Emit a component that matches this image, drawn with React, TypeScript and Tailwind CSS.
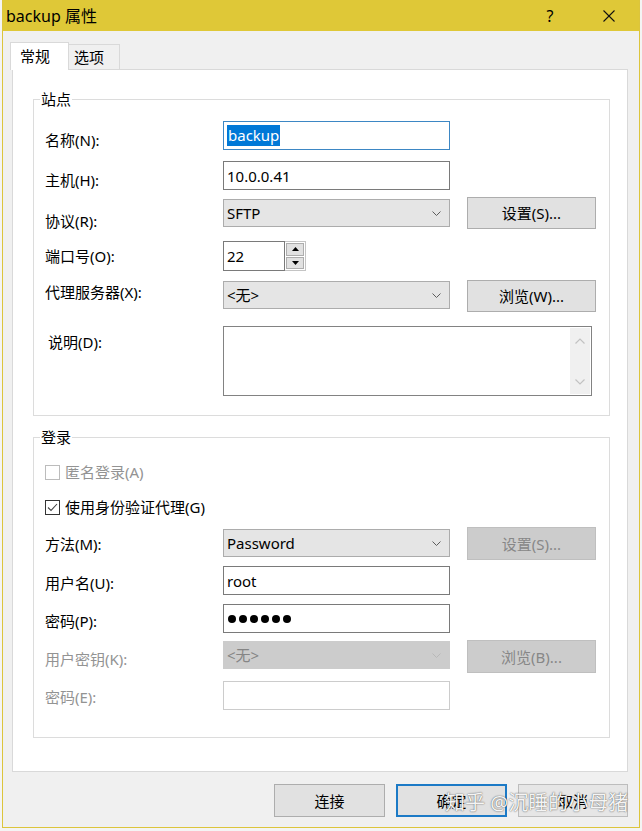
import React from "react";

function Chevron({ disabled }: { disabled?: boolean }) {
  return (
    <svg width="9" height="5" viewBox="0 0 9 5" className="shrink-0">
      <polyline points="0.5,0.5 4.5,4.5 8.5,0.5" fill="none" stroke={disabled ? "#b8b8b8" : "#5c5c5c"} strokeWidth="1" />
    </svg>
  );
}

function Select({ value, disabled }: { value: string; disabled?: boolean }) {
  return disabled ? (
    <div className="flex h-[28px] w-[227px] items-center justify-between border border-[#cccccc] bg-[#cccccc] pl-[3px] pr-[8px] text-[#858585]">
      <span>{value}</span>
      <Chevron disabled />
    </div>
  ) : (
    <div className="flex h-[28px] w-[227px] items-center justify-between border border-[#acacac] bg-[#e5e5e5] pl-[3px] pr-[8px]">
      <span>{value}</span>
      <Chevron />
    </div>
  );
}

function Btn({ text, disabled }: { text: string; disabled?: boolean }) {
  return disabled ? (
    <div className="flex h-[33px] w-[129px] items-center justify-center border border-[#bfbfbf] bg-[#cccccc] text-[#878787]">{text}</div>
  ) : (
    <div className="flex h-[32px] w-[129px] items-center justify-center border border-[#adadad] bg-[#e1e1e1]">{text}</div>
  );
}

function Tri({ up }: { up?: boolean }) {
  return (
    <svg width="7" height="4" viewBox="0 0 7 4">
      {up ? <polygon points="0,4 7,4 3.5,0" fill="#000" /> : <polygon points="0,0 7,0 3.5,4" fill="#000" />}
    </svg>
  );
}

function MemoChevron({ up }: { up?: boolean }) {
  return (
    <svg width="10" height="6" viewBox="0 0 10 6">
      <polyline points={up ? "0.5,5.5 5,1 9.5,5.5" : "0.5,0.5 5,5 9.5,0.5"} fill="none" stroke="#c2c2c2" strokeWidth="1.2" />
    </svg>
  );
}

export default function App() {
  return (
    <div className="relative h-[831px] w-[642px] overflow-hidden bg-[#f4f4f4] font-['Noto_Sans','Noto_Sans_CJK_SC',sans-serif] text-[15px] leading-[20px] text-black">
      <div className="ml-[2px] flex h-[828px] w-[638px] flex-col border-x border-b border-[#dcc53c] bg-[#f0f0f0]">
        {/* Title bar */}
        <div className="flex h-[31px] shrink-0 items-center bg-[#dfc837] pl-[3px]">
          <span className="text-[16px]">backup 属性</span>
          <div className="ml-auto flex w-[46px] items-center justify-center text-[16px]">?</div>
          <div className="ml-[13px] mr-[7px] flex w-[46px] items-center justify-center">
            <svg width="12" height="12" viewBox="0 0 12 12">
              <line x1="0.5" y1="0.5" x2="11.5" y2="11.5" stroke="#111" strokeWidth="1.1" />
              <line x1="11.5" y1="0.5" x2="0.5" y2="11.5" stroke="#111" strokeWidth="1.1" />
            </svg>
          </div>
        </div>

        {/* Tabs */}
        <div className="relative z-10 ml-[7px] mt-[11px] -mb-px flex items-end">
          <div className="flex h-[28px] w-[59px] items-center border-x border-t border-[#d9d9d9] bg-white pb-[1px] pl-[9px]">常规</div>
          <div className="mb-px flex h-[25px] w-[51px] items-center border-r border-t border-[#d9d9d9] bg-[#f0f0f0] pl-[5px]">选项</div>
        </div>

        {/* Panel */}
        <div className="ml-[9px] w-[616px] border border-[#d9d9d9] bg-white pb-[33px] pt-[19px]">
          {/* 站点 */}
          <fieldset className="ml-[20px] w-[577px] border border-[#dcdcdc]">
            <legend className="ml-[6px] px-px leading-[20px]">站点</legend>
            <div className="pb-[19px] pl-[11px]">
              <div className="mt-[12px] flex h-[29px] items-start">
                <div className="w-[178px] shrink-0 pt-[9px]">名称(N):</div>
                <div className="flex h-[29px] w-[227px] items-center border border-[#3d87c4] bg-white pl-[3px]">
                  <span className="bg-[#0078d7] px-px leading-[21px] text-white">backup</span>
                </div>
              </div>
              <div className="mt-[11px] flex h-[29px] items-start">
                <div className="w-[178px] shrink-0 pt-[9px]">主机(H):</div>
                <div className="flex h-[29px] w-[227px] items-center border border-[#7a7a7a] bg-white pl-[3px]">10.0.0.41</div>
              </div>
              <div className="mt-[7px] flex h-[32px] items-start">
                <div className="w-[178px] shrink-0 pt-[14px]">协议(R):</div>
                <div className="mt-[2px]">
                  <Select value="SFTP" />
                </div>
                <div className="ml-[17px]">
                  <Btn text="设置(S)..." />
                </div>
              </div>
              <div className="mt-[12px] flex h-[30px] items-start">
                <div className="w-[178px] shrink-0 pt-[5px]">端口号(O):</div>
                <div className="flex h-[30px]">
                  <div className="flex h-[30px] w-[62px] items-center border border-[#7a7a7a] bg-white pl-[3px]">22</div>
                  <div className="flex h-[30px] w-[21px] flex-col gap-px border border-l-0 border-[#c4c4c4] p-px">
                    <div className="flex flex-1 items-center justify-center border border-[#adadad] bg-[#e1e1e1]">
                      <Tri up />
                    </div>
                    <div className="flex flex-1 items-center justify-center border border-[#adadad] bg-[#e1e1e1]">
                      <Tri />
                    </div>
                  </div>
                </div>
              </div>
              <div className="mt-[9px] flex h-[32px] items-start">
                <div className="w-[178px] shrink-0 pt-[2px]">代理服务器(X):</div>
                <div className="mt-px">
                  <Select value="<无>" />
                </div>
                <div className="ml-[17px]">
                  <Btn text="浏览(W)..." />
                </div>
              </div>
              <div className="mt-[14px] flex h-[70px] items-start">
                <div className="w-[178px] shrink-0 pl-[3px] pt-[6px]">说明(D):</div>
                <div className="flex h-[70px] w-[369px] justify-end border border-[#828282] bg-white p-px">
                  <div className="flex w-[20px] flex-col items-center justify-between bg-[#f0f0f0] pb-[9px] pt-[10px]">
                    <MemoChevron up />
                    <MemoChevron />
                  </div>
                </div>
              </div>
            </div>
          </fieldset>

          {/* 登录 */}
          <fieldset className="ml-[20px] mt-[11px] w-[577px] border border-[#dcdcdc]">
            <legend className="ml-[6px] px-px leading-[20px]">登录</legend>
            <div className="pb-[27px] pl-[11px]">
              <div className="mt-[15px] flex h-[20px] items-center text-[#939393]">
                <div className="h-[15px] w-[15px] border border-[#bcbcbc] bg-white" />
                <span className="ml-[5px]">匿名登录(A)</span>
              </div>
              <div className="mt-[15px] flex h-[20px] items-center">
                <div className="flex h-[15px] w-[15px] items-center justify-center border border-[#333333] bg-white">
                  <svg width="11" height="9" viewBox="0 0 11 9">
                    <polyline points="1,4.5 4,7.5 10,1" fill="none" stroke="#444" strokeWidth="1.1" />
                  </svg>
                </div>
                <span className="ml-[5px]">使用身份验证代理(G)</span>
              </div>
              <div className="mt-[10px] flex h-[33px] items-start">
                <div className="w-[178px] shrink-0 pt-[7px]">方法(M):</div>
                <div className="mt-[2px]">
                  <Select value="Password" />
                </div>
                <div className="ml-[17px]">
                  <Btn text="设置(S)..." disabled />
                </div>
              </div>
              <div className="mt-[6px] flex h-[29px] items-start">
                <div className="w-[178px] shrink-0 pt-[7px]">用户名(U):</div>
                <div className="flex h-[29px] w-[227px] items-center border border-[#7a7a7a] bg-white pl-[3px]">root</div>
              </div>
              <div className="mt-[9px] flex h-[29px] items-start">
                <div className="w-[178px] shrink-0 pt-[7px]">密码(P):</div>
                <div className="flex h-[29px] w-[227px] items-center gap-[3px] border border-[#7a7a7a] bg-white pl-[4px]">
                  <span className="h-[8px] w-[8px] rounded-full bg-black" />
                  <span className="h-[8px] w-[8px] rounded-full bg-black" />
                  <span className="h-[8px] w-[8px] rounded-full bg-black" />
                  <span className="h-[8px] w-[8px] rounded-full bg-black" />
                  <span className="h-[8px] w-[8px] rounded-full bg-black" />
                  <span className="h-[8px] w-[8px] rounded-full bg-black" />
                </div>
              </div>
              <div className="mt-[7px] flex h-[33px] items-start">
                <div className="w-[178px] shrink-0 pt-[9px] text-[#939393]">用户密钥(K):</div>
                <div className="mt-px">
                  <Select value="<无>" disabled />
                </div>
                <div className="ml-[17px]">
                  <Btn text="浏览(B)..." disabled />
                </div>
              </div>
              <div className="mt-[8px] flex h-[29px] items-start">
                <div className="w-[178px] shrink-0 pt-[6px] text-[#939393]">密码(E):</div>
                <div className="h-[29px] w-[227px] border border-[#cccccc] bg-white" />
              </div>
            </div>
          </fieldset>
        </div>

        {/* Bottom buttons */}
        <div className="relative mt-[12px] flex justify-end gap-[11px] pr-[11px]">
          <div className="flex h-[33px] w-[111px] items-center justify-center border border-[#adadad] bg-[#e1e1e1]">连接</div>
          <div className="flex h-[33px] w-[111px] items-center justify-center border-2 border-[#1c7ac6] bg-[#e1e1e1]">确定</div>
          <div className="flex h-[33px] w-[110px] items-center justify-center border border-[#bdbdbd] bg-[#e6e6e6]">取消</div>
          <div className="pointer-events-none absolute left-[442px] top-[7px] whitespace-nowrap text-[20px] leading-[24px] text-white/95 [text-shadow:0_0_1px_rgba(0,0,0,0.55),0_0_2px_rgba(0,0,0,0.35)]">
            知乎 @沉睡的小母猪
          </div>
        </div>
      </div>
    </div>
  );
}
